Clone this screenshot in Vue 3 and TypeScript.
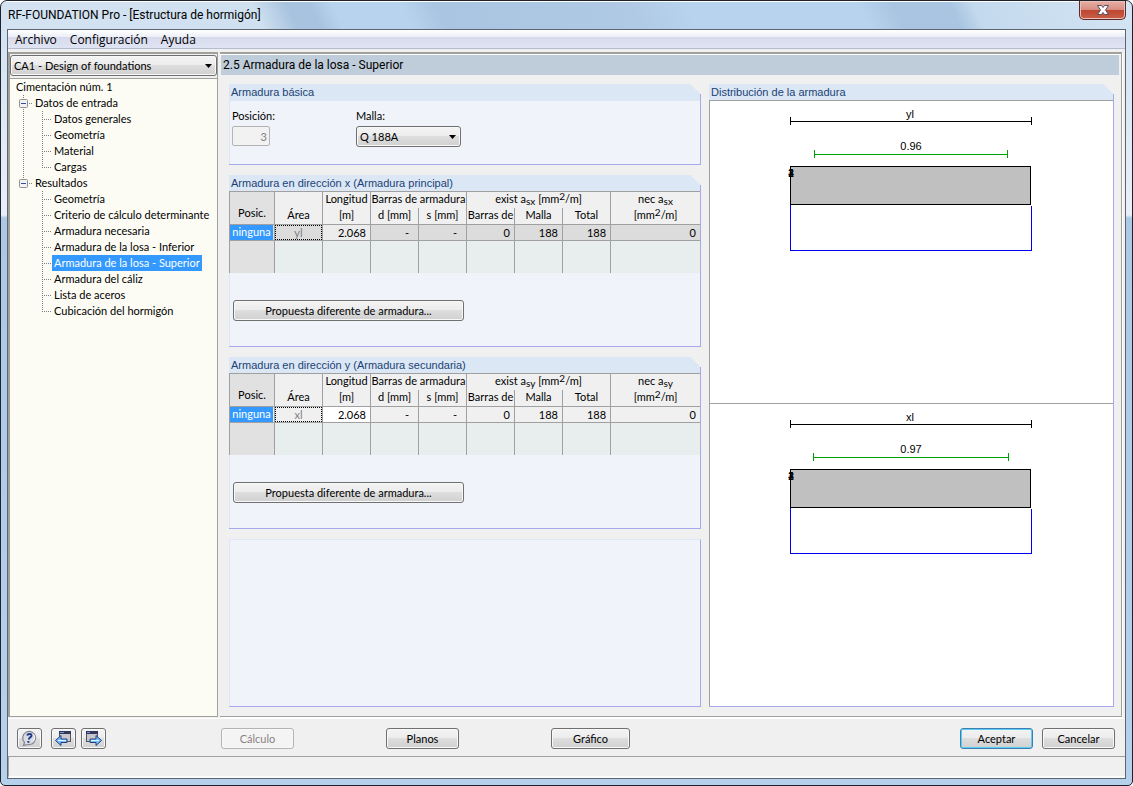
<script setup lang="ts">
import { ref } from 'vue'

interface Branch {
  label: string
  open: boolean
  items: string[]
}

interface Grid {
  axis: string
  title: string
  area: string
  length: string
  editable: boolean
}

interface Section {
  label: string
  span: string
  from: number
  to: number
}

const menus = ['Archivo', 'Configuración', 'Ayuda']
const selected = ref('Armadura de la losa - Superior')
const loadCase = ref('CA1 - Design of foundations')
const mesh = ref('Q 188A')
const position = ref('3')

const branches = ref<Branch[]>([
  { label: 'Datos de entrada', open: true, items: ['Datos generales', 'Geometría', 'Material', 'Cargas'] },
  {
    label: 'Resultados',
    open: true,
    items: [
      'Geometría',
      'Criterio de cálculo determinante',
      'Armadura necesaria',
      'Armadura de la losa - Inferior',
      'Armadura de la losa - Superior',
      'Armadura del cáliz',
      'Lista de aceros',
      'Cubicación del hormigón',
    ],
  },
])

const grids: Grid[] = [
  { axis: 'x', title: 'Armadura en dirección x (Armadura principal)', area: 'yl', length: '2.068', editable: false },
  { axis: 'y', title: 'Armadura en dirección y (Armadura secundaria)', area: 'xl', length: '2.068', editable: true },
]

const sections: Section[] = [
  { label: 'yl', span: '0.96', from: 25, to: 218 },
  { label: 'xl', span: '0.97', from: 24, to: 219 },
]
</script>

<template>
  <div class="window">
    <header class="titlebar">
      <h1>RF-FOUNDATION Pro - [Estructura de hormigón]</h1>
      <button class="close" type="button" aria-label="Cerrar">
        <svg width="14" height="12" viewBox="0 0 14 12" aria-hidden="true">
          <path d="M1.500 1.500h4L7 3.500l1.500-2h4L9.500 6l3 4.500h-4L7 8.500l-1.500 2h-4l3-4.500z" fill="#fff" stroke="#56505f" stroke-width="1" />
        </svg>
      </button>
    </header>

    <div class="client">
      <nav class="menubar">
        <button v-for="m in menus" :key="m" type="button">{{ m }}</button>
      </nav>

      <div class="workspace">
        <aside class="sidebar">
          <div class="combo case">
            <select v-model="loadCase" aria-label="Caso">
              <option>CA1 - Design of foundations</option>
            </select>
            <svg width="7" height="4" viewBox="0 0 7 4" aria-hidden="true"><path d="M0 0h7L3.500 4z" /></svg>
          </div>
          <div class="tree">
            <div class="root">Cimentación núm. 1</div>
            <ul class="branches">
              <li v-for="b in branches" :key="b.label">
                <div class="branch">
                  <button class="toggle" type="button" :aria-label="b.label" :aria-expanded="b.open" @click="b.open = !b.open">
                    <svg width="9" height="9" viewBox="0 0 9 9" aria-hidden="true">
                      <rect x="0.500" y="0.500" width="8" height="8" rx="1" fill="#f2f2f2" stroke="#919191" />
                      <path d="M2 4.500h5" stroke="#2c4fa8" />
                      <path v-if="!b.open" d="M4.500 2v5" stroke="#2c4fa8" />
                    </svg>
                  </button>
                  <span>{{ b.label }}</span>
                </div>
                <ul v-if="b.open" class="leaves">
                  <li v-for="item in b.items" :key="item">
                    <button type="button" :class="{ active: item === selected }" @click="selected = item">{{ item }}</button>
                  </li>
                </ul>
              </li>
            </ul>
          </div>
        </aside>

        <main class="main">
          <h2>2.5 Armadura de la losa - Superior</h2>
          <div class="columns">
            <div class="left">
              <section class="group">
                <h3>Armadura básica</h3>
                <div class="body basic">
                  <div class="field">
                    <label for="pos">Posición:</label>
                    <input id="pos" v-model="position" type="text" disabled />
                  </div>
                  <div class="field">
                    <label for="mesh">Malla:</label>
                    <div class="combo mesh">
                      <select id="mesh" v-model="mesh">
                        <option>Q 188A</option>
                      </select>
                      <svg width="7" height="4" viewBox="0 0 7 4" aria-hidden="true"><path d="M0 0h7L3.500 4z" /></svg>
                    </div>
                  </div>
                </div>
              </section>

              <section v-for="g in grids" :key="g.axis" class="group">
                <h3>{{ g.title }}</h3>
                <div class="body reinforcement">
                  <table :class="{ editable: g.editable }">
                    <colgroup>
                      <col class="c-first" />
                      <col v-for="n in 7" :key="n" class="c-mid" />
                      <col />
                    </colgroup>
                    <thead>
                      <tr class="r1">
                        <th rowspan="2" class="posic">Posic.</th>
                        <th rowspan="2" class="area">Área</th>
                        <th>Longitud</th>
                        <th colspan="2">Barras de armadura</th>
                        <th colspan="3">exist a<sub>s{{ g.axis }}</sub> [mm<sup>2</sup>/m]</th>
                        <th>nec a<sub>s{{ g.axis }}</sub></th>
                      </tr>
                      <tr class="r2">
                        <th>[m]</th>
                        <th>d [mm]</th>
                        <th>s [mm]</th>
                        <th>Barras de</th>
                        <th>Malla</th>
                        <th>Total</th>
                        <th>[mm<sup>2</sup>/m]</th>
                      </tr>
                    </thead>
                    <tbody>
                      <tr class="data">
                        <td class="none"><span>ninguna</span></td>
                        <td class="focus"><span>{{ g.area }}</span></td>
                        <td class="length">{{ g.length }}</td>
                        <td class="dash">-</td>
                        <td class="dash">-</td>
                        <td>0</td>
                        <td>188</td>
                        <td>188</td>
                        <td>0</td>
                      </tr>
                      <tr class="blank">
                        <td v-for="n in 9" :key="n"></td>
                      </tr>
                    </tbody>
                  </table>
                  <button class="btn wide" type="button">Propuesta diferente de armadura...</button>
                </div>
              </section>

              <section class="group empty"></section>
            </div>

            <section class="group right">
              <h3>Distribución de la armadura</h3>
              <div class="canvases">
                <div v-for="s in sections" :key="s.label" class="canvas">
                  <svg width="246" height="152" viewBox="1 0 246 152" role="img" :aria-label="s.label">
                    <g fill="none" stroke="#000" shape-rendering="crispEdges">
                      <path d="M2.500 16v8M243.500 16v8M2 20.500h241" />
                      <path :d="`M${s.from + 1.5} 49v8M${s.to + 1.5} 49v8M${s.from + 1} 53.500H${s.to + 1}`" stroke="#00a000" />
                      <path d="M2.500 104v45.500H243.500V105" stroke="#0000f0" />
                      <rect x="2.500" y="65.500" width="240" height="38" fill="#c0c0c0" />
                    </g>
                    <g class="caption">
                      <text x="122" y="17">{{ s.label }}</text>
                      <text x="123" y="49">{{ s.span }}</text>
                    </g>
                    <g class="mark">
                      <text x="3" y="76">1</text>
                      <text x="3" y="76">2</text>
                      <text x="3" y="76">3</text>
                      <text x="3" y="76">4</text>
                    </g>
                  </svg>
                </div>
              </div>
            </section>
          </div>
        </main>
      </div>

      <footer class="actions">
        <button class="btn icon" type="button" aria-label="Ayuda">
          <svg width="19" height="17" viewBox="0 0 19 17" aria-hidden="true">
            <path d="M3.500 15.500l1-3A6.500 6.500 0 1 1 9 14.500c-2 0-3 .3-5.500 1z" fill="#d9dce2" stroke="#82868e" stroke-width="1.200" />
            <path d="M7.200 5.500C7.500 3.500 11.800 3.200 11.500 5.600c-.2 1.700-2.500 1.800-2.700 3.900M8.400 11v1.700" fill="none" stroke="#1f3a86" stroke-width="2" />
            <path d="M13.500 4a6 6 0 0 1 0 7" fill="none" stroke="#fff" />
          </svg>
        </button>
        <button class="btn icon prev" type="button" aria-label="Anterior">
          <svg width="19" height="17" viewBox="0 0 19 17" aria-hidden="true">
            <rect x="5.500" y="2.500" width="11" height="9" fill="#c8c8cc" stroke="#54545e" />
            <path d="M5 1h12v3H5z" fill="#34365a" />
            <path d="M6 2h4v1H6z" fill="#6a94dc" />
            <path d="M1.500 10.500L7 5.500V9h6v3.500H7V15.500z" fill="#6fbcff" stroke="#27407e" />
            <path d="M4 10.500h8" stroke="#e4f6ff" />
          </svg>
        </button>
        <button class="btn icon next" type="button" aria-label="Siguiente">
          <svg width="19" height="17" viewBox="0 0 19 17" aria-hidden="true">
            <rect x="2.500" y="2.500" width="11" height="9" fill="#c8c8cc" stroke="#54545e" />
            <path d="M2 1h12v3H2z" fill="#34365a" />
            <path d="M3 2h3v1H3z" fill="#6a94dc" />
            <path d="M17.500 10.500L12 5.500V9H6v3.500h6V15.500z" fill="#6fbcff" stroke="#27407e" />
            <path d="M7 10.500h8" stroke="#e4f6ff" />
          </svg>
        </button>
        <button class="btn calc" type="button" disabled>Cálculo</button>
        <button class="btn plans" type="button">Planos</button>
        <button class="btn graph" type="button">Gráfico</button>
        <button class="btn ok" type="button">Aceptar</button>
        <button class="btn cancel" type="button">Cancelar</button>
      </footer>
      <div class="status"></div>
    </div>
  </div>
</template>

<style>
body {
  margin: 0;
  background: #fff;
}
</style>

<style scoped>
* {
  box-sizing: border-box;
}
.window {
  display: flex;
  flex-direction: column;
  min-height: 100vh;
  padding: 0 6px 6px;
  border: 1px solid #1e222c;
  border-radius: 7px 7px 5px 5px;
  font: 11px/16px Lato, "Liberation Sans", sans-serif;
  color: #000;
  background:
    linear-gradient(#fff, #fff) 0 0 / 100% 1px no-repeat,
    linear-gradient(65deg, #d4e3f2 0, #cfe0f0 23%, #a8c3df 26%, #a8c3df 28%, #b8d3ee 30%, #b8d3ee 36%, #a9c5e1 39%, #b0cae5 56%, #b8d3ee 61%, #b8d3ee 76%, #a9c5e1 79%, #a9c5e1 84%, #c3d9ed 86%, #d4e5f4 100%) 0 0 / 100% 29px no-repeat,
    linear-gradient(#cfe0f1 0, #e9eef8 200px, #e9eef8 214px, #abc8e5 217px, #b6d1ec 100%);
}
button,
input,
select {
  font: inherit;
  color: inherit;
}
.titlebar {
  display: flex;
  justify-content: space-between;
  align-items: flex-start;
  height: 28px;
}
h1 {
  margin: 5px 0 0 1px;
  font: 12px/18px Roboto, "Open Sans", sans-serif;
}
.close {
  display: flex;
  align-items: center;
  justify-content: center;
  width: 47px;
  height: 19px;
  padding: 0;
  border: 1px solid #5b2a2a;
  border-top: 0;
  border-radius: 0 0 5px 5px;
  background: linear-gradient(#e6b0a6 0, #d78d80 48%, #bf4630 52%, #c9604a 100%);
  box-shadow: inset 0 0 0 1px #e9c0b8;
}
.client {
  display: flex;
  flex-direction: column;
  flex: 1;
  border: 1px solid #5d6670;
  background: #f0f0f0;
}
.menubar {
  display: flex;
  height: 19px;
  padding-left: 7px;
  gap: 13px;
  border-bottom: 1px solid #b4bccd;
  background: linear-gradient(#fff 0, #eceff7 38%, #d7dbed 40%, #dfe4f3 100%);
}
.menubar button {
  padding: 0;
  border: 0;
  background: none;
  font: 12px/20px "Open Sans", "Noto Sans", sans-serif;
}
.workspace {
  display: flex;
  flex: 1;
  margin-top: 3px;
}
.sidebar {
  display: flex;
  flex-direction: column;
  width: 210px;
  margin-bottom: 1px;
  padding-top: 1px;
  border: solid #a0a09c;
  border-width: 2px 1px 1px 2px;
}
.combo {
  position: relative;
  height: 21px;
}
.combo select {
  width: 100%;
  height: 100%;
  padding: 0 3px;
  border: 1px solid #707070;
  border-radius: 3px;
  appearance: none;
  background: linear-gradient(#f4f4f4 0, #ececec 49%, #dedede 50%, #d0d0d0 100%);
  box-shadow: inset 0 0 0 1px #f8f8f8;
}
.combo svg {
  position: absolute;
  right: 5px;
  top: 9px;
  pointer-events: none;
}
.tree {
  flex: 1;
  margin-top: 2px;
  padding-left: 6px;
  border-top: 1px solid #a0a0a0;
  background: #fcfcf4;
}
ul {
  margin: 0;
  padding: 0;
  list-style: none;
}
.branches {
  margin-left: 3px;
}
.branches > li {
  background: repeating-linear-gradient(#808080 0 1px, transparent 1px 2px) 4px 0 / 1px 100% no-repeat;
}
.branches > li:last-child {
  background-size: 1px 8px;
}
.branch {
  display: flex;
  align-items: center;
  height: 16px;
}
.branch span {
  padding-left: 7px;
  background: repeating-linear-gradient(90deg, #808080 0 1px, transparent 1px 2px) 1px 8px / 4px 1px no-repeat;
}
.toggle {
  display: flex;
  padding: 0;
  border: 0;
  background: none;
}
.leaves {
  margin-left: 23px;
}
.leaves li {
  display: flex;
  height: 16px;
  padding-left: 10px;
  background:
    repeating-linear-gradient(#808080 0 1px, transparent 1px 2px) 0 0 / 1px 100% no-repeat,
    repeating-linear-gradient(90deg, #808080 0 1px, transparent 1px 2px) 0 8px / 9px 1px no-repeat;
}
.leaves li:last-child {
  background-size: 1px 8px, 9px 1px;
}
.leaves button {
  padding: 0 2px;
  border: 0;
  background: none;
  line-height: 16px;
  white-space: nowrap;
}
.leaves .active {
  color: #fff;
  background: #3399ff;
}
.main {
  display: flex;
  flex-direction: column;
  flex: 1;
  margin: 0 3px 1px 2px;
  padding: 1px 2px 9px 1px;
  border: solid #a0a09c;
  border-width: 2px 1px 1px 0;
  box-shadow: 1px 1px #fff, inset 0 1px #fff;
}
h2 {
  margin: 0;
  padding-left: 2px;
  font: 12px/20px Roboto, "Open Sans", sans-serif;
  background: #bfccd9;
}
.columns {
  display: flex;
  flex: 1;
  gap: 8px;
  padding: 9px 5px 0 8px;
}
.left {
  display: flex;
  flex-direction: column;
  gap: 10px;
  width: 472px;
}
.group {
  display: flex;
  flex-direction: column;
}
h3 {
  margin: 0;
  padding-left: 2px;
  height: 16px;
  font: 11px/16px "Liberation Sans", Arial, sans-serif;
  color: #1b4275;
  background:
    linear-gradient(#a8a8ec, #a8a8ec) 100% 100% / 1px 6px no-repeat,
    linear-gradient(225deg, transparent 7px, #dbe7f4 8px);
}
.body {
  border: solid #a8a8ec;
  border-width: 0 1px 1px 0;
  background: #f0f3f9;
  box-shadow: inset 1px 1px #dfe7f5;
}
.basic {
  display: flex;
  height: 65px;
  padding: 8px 0 0 3px;
}
.field {
  width: 124px;
}
.field label {
  display: block;
  margin-bottom: 2px;
}
.field input {
  display: block;
  width: 38px;
  height: 20px;
  padding: 0 2px;
  border: 1px solid #b4b4b4;
  border-radius: 2px;
  text-align: right;
  color: #808080;
  background: #f2f2f2;
}
.mesh {
  width: 105px;
}
.reinforcement {
  height: 156px;
}
table {
  width: 100%;
  table-layout: fixed;
  border-spacing: 0;
  border-collapse: separate;
  border: solid #a0a0a0;
  border-width: 1px 0 0 1px;
}
.c-first {
  width: 45px;
}
.c-mid {
  width: 48px;
}
th,
td {
  height: 16px;
  padding: 0;
  border-right: 1px solid #a0a0a0;
  line-height: 15px;
  white-space: nowrap;
}
tr > :last-child {
  border-right: 0;
}
th {
  padding-bottom: 2px;
  font-weight: normal;
  line-height: 14px;
  text-align: center;
  background: #f0f0f0;
}
.r2 th,
th[rowspan] {
  height: 17px;
  border-bottom: 1px solid #a0a0a0;
}
th[rowspan] {
  vertical-align: bottom;
}
.posic {
  padding-bottom: 4px;
  background: #e1e1e1;
}
sub,
sup {
  font-size: 10px;
  line-height: 0;
}
sub {
  vertical-align: -2px;
}
sup {
  vertical-align: 3px;
}
.data td {
  padding-right: 4px;
  border-bottom: 1px solid #a0a0a0;
  text-align: right;
  background: #dcdcdc;
}
.data .length {
  background: #ececec;
}
.editable .data td {
  background: #f0f0f0;
}
.editable .data .length {
  background: #fff;
}
.data .dash {
  padding-right: 9px;
}
.data .none,
.data .focus {
  padding: 0;
  text-align: center;
}
.none span,
.focus span {
  display: block;
  height: 15px;
}
.none span {
  margin-right: 1px;
  line-height: 14px;
  color: #fff;
  background: #3399ff;
}
.focus span {
  border: 1px dotted #000;
  line-height: 13px;
  color: #808080;
}
.blank td {
  height: 32px;
  background: #e8eeed;
}
.blank td:first-child {
  background: #e1e1e1;
}
.btn {
  height: 21px;
  padding: 0;
  border: 1px solid #707070;
  border-radius: 3px;
  line-height: 19px;
  background: linear-gradient(#f3f3f3 0, #ececec 49%, #dedede 50%, #d0d0d0 100%);
  box-shadow: inset 0 0 0 1px #f8f8f8;
}
.btn:disabled {
  border-color: #b4b4b4;
  color: #8a8280;
  background: #f4f4f4;
}
.wide {
  display: block;
  width: 231px;
  margin: 27px 0 0 4px;
}
.empty {
  flex: 1;
  border: 1px solid #a8a8ec;
  border-color: #dfe7f5 #a8a8ec #a8a8ec #dfe7f5;
  background: #f0f3f9;
}
.right {
  flex: 1;
}
.canvases {
  display: flex;
  flex-direction: column;
  flex: 1;
  border: solid #a8a8ec;
  border-width: 0 1px 1px 0;
  background: #fff;
}
.canvas {
  flex: 1;
  display: flex;
  justify-content: center;
  align-items: flex-start;
  border: solid #a0a0a0;
  border-width: 1px 0 0 1px;
}
.canvas svg {
  overflow: visible;
}
.caption text,
.mark text {
  text-anchor: middle;
  font: 11px "Liberation Sans", Arial, sans-serif;
}
.mark text {
  font-size: 10px;
}
.actions {
  display: flex;
  height: 39px;
  padding: 10px 10px 0 9px;
  border-bottom: 1px solid #a0a0a0;
  box-shadow: inset 0 1px #fff;
}
.actions .btn {
  width: 73px;
}
.actions .icon {
  display: flex;
  align-items: center;
  justify-content: center;
  width: 25px;
}
.actions .prev {
  margin-left: 9px;
}
.actions .next {
  margin-left: 5px;
}
.actions .calc {
  margin-left: 115px;
}
.actions .plans,
.actions .graph {
  margin-left: 92px;
}
.actions .graph {
  width: 79px;
}
.actions .ok {
  margin-left: auto;
  border-color: #3c7fb1;
  box-shadow: inset 0 0 0 1px #5ccdf2;
}
.actions .cancel {
  margin-left: 9px;
}
.status {
  height: 21px;
  border-left: 1px solid #a0a0a0;
  border-bottom: 2px solid #fbfbfb;
}
</style>
